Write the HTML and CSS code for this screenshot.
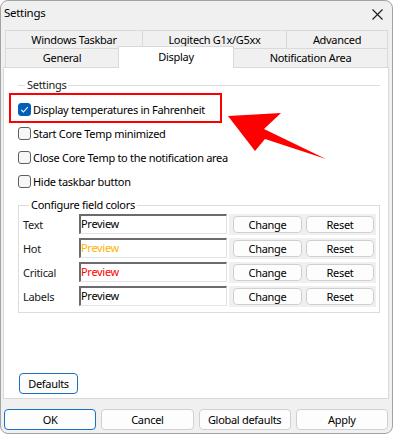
FILE: index.html
```html
<!DOCTYPE html>
<html>
<head>
<meta charset="utf-8">
<link rel="stylesheet" href="styles.css">
</head>
<body>
<div class="window">
  <div class="titlebar">
    <span class="title">Settings</span>
    <svg class="close" width="11" height="11" viewBox="0 0 11 11"><path d="M0.5 0.5 L10.5 10.5 M10.5 0.5 L0.5 10.5" stroke="#1a1a1a" stroke-width="1.1" fill="none"/></svg>
  </div>
  <div class="tabs">
    <div class="tabrow row1">
      <div class="tab first w-taskbar">Windows Taskbar</div>
      <div class="tab w-logitech">Logitech G1x/G5xx</div>
      <div class="tab w-advanced">Advanced</div>
    </div>
    <div class="tabrow row2">
      <div class="tab first w-general">General</div>
      <div class="tab selected w-display">Display</div>
      <div class="tab w-notif">Notification Area</div>
    </div>
  </div>
  <div class="panel">
    <div class="legend1"><span class="legend-text">Settings</span></div>
    <div class="checks">
      <label class="check"><span class="box checked"><svg width="13" height="13" viewBox="0 0 13 13"><path d="M3.2 6.8 L5.4 9 L9.8 4.2" stroke="#fff" stroke-width="1.1" fill="none"/></svg></span><span>Display temperatures in Fahrenheit</span></label>
      <label class="check"><span class="box"></span><span>Start Core Temp minimized</span></label>
      <label class="check"><span class="box"></span><span>Close Core Temp to the notification area</span></label>
      <label class="check"><span class="box"></span><span>Hide taskbar button</span></label>
    </div>
    <div class="group2">
      <div class="legend2">Configure field colors</div>
      <div class="crow"><span class="clabel">Text</span><div class="preview">Preview</div><div class="btns"><button class="btn change">Change</button><button class="btn reset">Reset</button></div></div>
      <div class="crow"><span class="clabel">Hot</span><div class="preview hot">Preview</div><div class="btns"><button class="btn change">Change</button><button class="btn reset">Reset</button></div></div>
      <div class="crow"><span class="clabel">Critical</span><div class="preview critical">Preview</div><div class="btns"><button class="btn change">Change</button><button class="btn reset">Reset</button></div></div>
      <div class="crow"><span class="clabel">Labels</span><div class="preview">Preview</div><div class="btns"><button class="btn change">Change</button><button class="btn reset">Reset</button></div></div>
    </div>
    <button class="btn default defaults">Defaults</button>
  </div>
  <div class="footer">
    <button class="btn default">OK</button>
    <button class="btn">Cancel</button>
    <button class="btn">Global defaults</button>
    <button class="btn">Apply</button>
  </div>

  <div class="annot-rect"></div>
  <div class="annot-underline"></div>
  <svg class="annot-arrow" width="393" height="434" viewBox="0 0 393 434"><polygon points="228,116 281,113 264,129 326,159 265,139 255,151" fill="#ff0000"/></svg>
</div>
</body>
</html>
```
FILE: styles.css
```css
* { box-sizing: border-box; }
body {
  margin: 0;
  background: #ffffff;
  font-family: "Noto Sans", "Segoe UI", sans-serif;
  font-size: 11px;
  letter-spacing: -0.3px;
  color: #000;
}
.window {
  position: relative;
  width: 393px;
  height: 434px;
  border: 1px solid #a3a3a3;
  border-radius: 8px;
  background: #f0f0f0;
  overflow: hidden;
}
.titlebar {
  height: 29px;
  display: flex;
  align-items: flex-start;
  padding: 4px 0 0 3px;
}
.title { line-height: 16px; font-size: 11.5px; }
.close { margin-left: auto; margin-right: 9px; margin-top: 4px; }

.tabs { margin-left: 4px; width: 383px; }
.tabrow { display: flex; }
.row1 { height: 18px; }
.row2 { height: 19px; }
.tab {
  border-top: 1px solid #d9d9d9;
  border-right: 1px solid #d9d9d9;
  background: #f0f0f0;
  display: flex;
  align-items: center;
  justify-content: center;
  line-height: 16px;
  flex: none;
}
.tab.first { border-left: 1px solid #d9d9d9; }
.w-taskbar { width: 138px; }
.w-logitech { width: 144px; }
.w-advanced { width: 101px; }
.w-general { width: 114px; }
.w-display { width: 116px; }
.w-notif { width: 154px; }
.tab.selected {
  position: relative;
  z-index: 1;
  background: #ffffff;
  border-left: 1px solid #d9d9d9;
  margin-left: -1px;
  margin-top: -2px;
  height: 22px;
  padding-bottom: 1px;
}

.panel {
  margin-left: 2px;
  width: 386px;
  height: 332px;
  background: #fff;
  border: 1px solid #d9d9d9;
  padding: 0 8px 0 14px;
}
.legend1 {
  margin-top: 9px;
  height: 16px;
  display: flex;
  align-items: center;
  color: #1a1a1a;
}
.legend1::before { content: ""; width: 7px; height: 1px; background: #dcdcdc; }
.legend1::after { content: ""; flex: 1; height: 1px; background: #dcdcdc; }
.legend-text { padding: 0 2px; line-height: 16px; }

.checks { margin-top: 4px; }
.check {
  height: 24px;
  display: flex;
  align-items: center;
  gap: 2px;
}
.box {
  width: 13px;
  height: 13px;
  border: 1px solid #5f5f5f;
  border-radius: 3px;
  background: #f7f7f7;
  flex: none;
  display: block;
}
.box.checked {
  background: #005fb8;
  border-color: #005fb8;
}
.box.checked svg { display: block; margin: -1px; }

.group2 {
  margin-top: 12px;
  width: 362px;
  border: 1px solid #dcdcdc;
  padding: 0 3px 4px 4px;
}
.legend2 {
  display: table;
  margin-top: -9px;
  margin-left: 6px;
  padding: 0 2px;
  background: #fff;
  line-height: 16px;
  margin-bottom: -1px;
}
.crow {
  height: 24px;
  display: flex;
  align-items: center;
}
.clabel { width: 56px; color: #1a1a1a; }
.preview {
  width: 148px;
  height: 20px;
  border-top: 2px solid #6b6b6b;
  border-left: 2px solid #6b6b6b;
  border-right: 1px solid #e3e3e3;
  border-bottom: 1px solid #e3e3e3;
  line-height: 16px;
  padding-left: 0;
  background: #fff;
}
.preview.hot { color: #ffb300; }
.preview.critical { color: #ff0000; }
.btns {
  margin-left: 2px;
  background: #f0f0f0;
  display: flex;
  gap: 4px;
  padding: 2px 2px 2px 4px;
}
.btn {
  font-family: inherit;
  font-size: 11px;
  letter-spacing: -0.3px;
  color: #000;
  background: #fdfdfd;
  border: 1px solid #d0d0d0;
  border-radius: 4px;
  padding: 0;
  line-height: 15px;
}
.change { width: 69px; height: 17px; }
.reset { width: 68px; height: 17px; }
.btn.default { border-color: #1d6fc5; }
.defaults {
  display: block;
  margin-top: 60px;
  margin-left: 1px;
  width: 59px;
  height: 21px;
}
.footer {
  margin-top: 10px;
  margin-left: 3px;
  width: 384px;
  display: grid;
  grid-template-columns: repeat(4, 1fr);
  gap: 5px;
}
.footer .btn { height: 21px; }

.annot-rect {
  position: absolute;
  left: 8px;
  top: 92px;
  width: 213px;
  height: 30px;
  border: 2px solid #ff0000;
}
.annot-underline {
  position: absolute;
  left: 150px;
  top: 61px;
  width: 46px;
  height: 2px;
  background: #ff0000;
}
.annot-arrow {
  position: absolute;
  left: -1px;
  top: -1px;
}
```
